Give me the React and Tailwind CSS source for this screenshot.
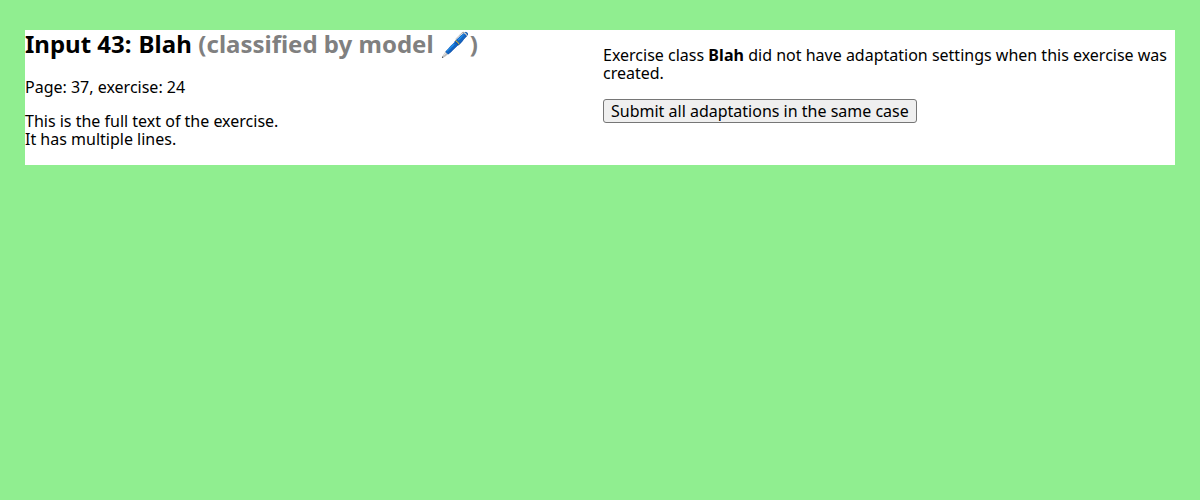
export default function App() {
  return (
    <div className="min-h-screen bg-[#90ee90] px-[25px] pt-[30px] font-['Noto_Sans',sans-serif] text-[16px] leading-[18px] text-black">
      <div className="grid h-[135px] grid-cols-2 gap-[6px] bg-white">
        <div>
          <h2 className="text-[24px] font-bold leading-[28px]">
            Input 43: <span className="ml-[0.6px] tracking-[0.15px]">Blah</span>{" "}
            <span className="text-[#808080]">(classified by model 🖊️)</span>
          </h2>
          <p className="mt-[20px]">Page: 37, exercise: 24</p>
          <p className="mt-4">
            This is the full text of the exercise.
            <br />
            It has multiple lines.
          </p>
        </div>
        <div>
          <p className="mt-4">
            Exercise class <b className="tracking-[0.1px]">Blah</b> did not have adaptation settings when this exercise was created.
          </p>
          <button className="mt-[17px] block h-6 rounded-[3px] border border-[#767676] bg-[#efefef] px-[7px] leading-[22px]">
            Submit all adaptations in the same case
          </button>
        </div>
      </div>
    </div>
  );
}
